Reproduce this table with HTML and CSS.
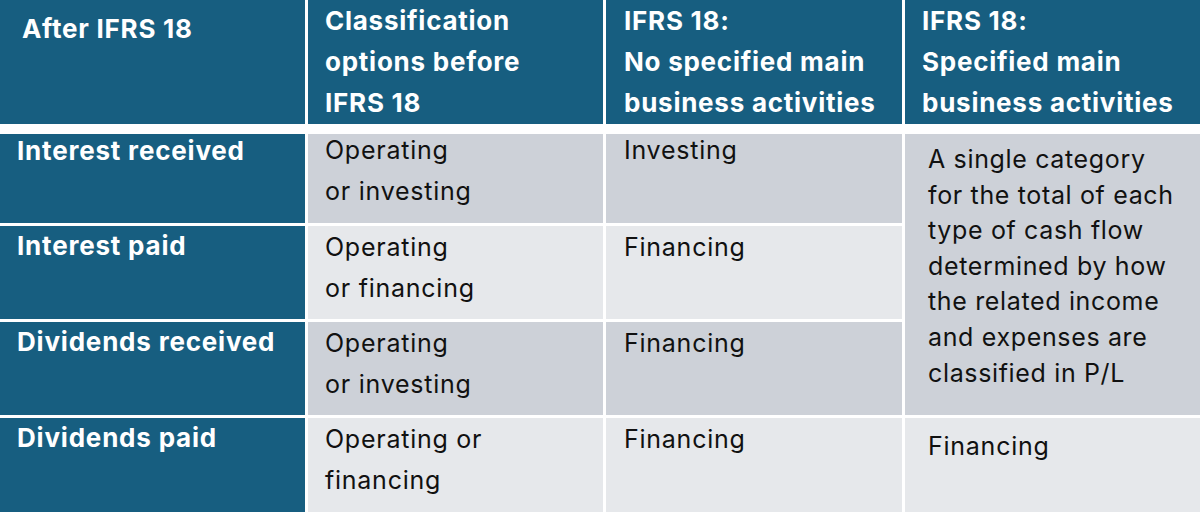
FILE: index.html
```html
<!DOCTYPE html>
<html lang="en">
<head>
<meta charset="utf-8">
<title>IFRS 18 cash flow classification</title>
<link rel="stylesheet" href="styles.css">
</head>
<body>
<div class="table">
  <div class="head">
    <div class="hcell first">After IFRS 18</div>
    <div class="hcell">Classification<br>options before<br>IFRS 18</div>
    <div class="hcell c3">IFRS 18:<br>No specified main<br>business activities</div>
    <div class="hcell c4">IFRS 18:<br>Specified main<br>business activities</div>
  </div>
  <div class="body">
    <div class="label r1">Interest received</div>
    <div class="cell dark r1"><div class="t">Operating<br>or investing</div></div>
    <div class="cell dark c3 r1"><div class="t">Investing</div></div>
    <div class="cell dark merged">A single category<br>for the total of each<br>type of cash flow<br>determined by how<br>the related income<br>and expenses are<br>classified in P/L</div>

    <div class="label r2">Interest paid</div>
    <div class="cell light r2">Operating<br>or financing</div>
    <div class="cell light c3 r2">Financing</div>

    <div class="label r3">Dividends received</div>
    <div class="cell dark r3">Operating<br>or investing</div>
    <div class="cell dark c3 r3">Financing</div>

    <div class="label r4">Dividends paid</div>
    <div class="cell light r4">Operating or<br>financing</div>
    <div class="cell light c3 r4">Financing</div>
    <div class="cell light c4 r4 last">Financing</div>
  </div>
</div>
</body>
</html>
```
FILE: styles.css
```css
html, body {
  margin: 0;
  padding: 0;
  background: #ffffff;
}
body {
  width: 1200px;
  height: 512px;
  overflow: hidden;
  font-family: Inter, "Liberation Sans", sans-serif;
}
.table {
  display: flex;
  flex-direction: column;
  gap: 10px;
}
.head {
  display: grid;
  grid-template-columns: 305px 295px 296px 295px;
  column-gap: 3px;
  height: 124px;
}
.hcell {
  background: #175e80;
  color: #ffffff;
  font-weight: 700;
  font-size: 26px;
  line-height: 41px;
  letter-spacing: 0.75px;
  padding: 0 0 0 17px;
  white-space: nowrap;
}
.hcell.c3 { padding-left: 18px; }
.hcell.first {
  padding: 8px 0 0 22px;
}
.body {
  display: grid;
  grid-template-columns: 305px 295px 296px 295px;
  grid-template-rows: 89px 93px 93px 94px;
  gap: 3px;
}
.label {
  grid-column: 1;
  background: #175e80;
  color: #ffffff;
  font-weight: 700;
  font-size: 26px;
  letter-spacing: 0.8px;
  line-height: 32px;
  padding: 4px 0 0 17px;
  white-space: nowrap;
}
.label.r1 { padding-top: 1px; }
.cell {
  color: #111111;
  font-size: 25px;
  letter-spacing: 0.75px;
  line-height: 40.5px;
  padding: 1px 0 0 17px;
  white-space: nowrap;
}
.cell.r1 { padding-top: 0; }
.cell .t { margin-top: -4px; }
.cell.c3 { padding-left: 18px; }
.dark { background: #cdd1d8; }
.light { background: #e6e8eb; }
.r1 { grid-row: 1; }
.r2 { grid-row: 2; }
.r3 { grid-row: 3; }
.r4 { grid-row: 4; }
.merged {
  grid-column: 4;
  grid-row: 1 / span 3;
  padding: 8px 0 0 23px;
  line-height: 35.6px;
  letter-spacing: 0.65px;
}
.cell.last {
  grid-column: 4;
  padding: 8px 0 0 23px;
}
```
